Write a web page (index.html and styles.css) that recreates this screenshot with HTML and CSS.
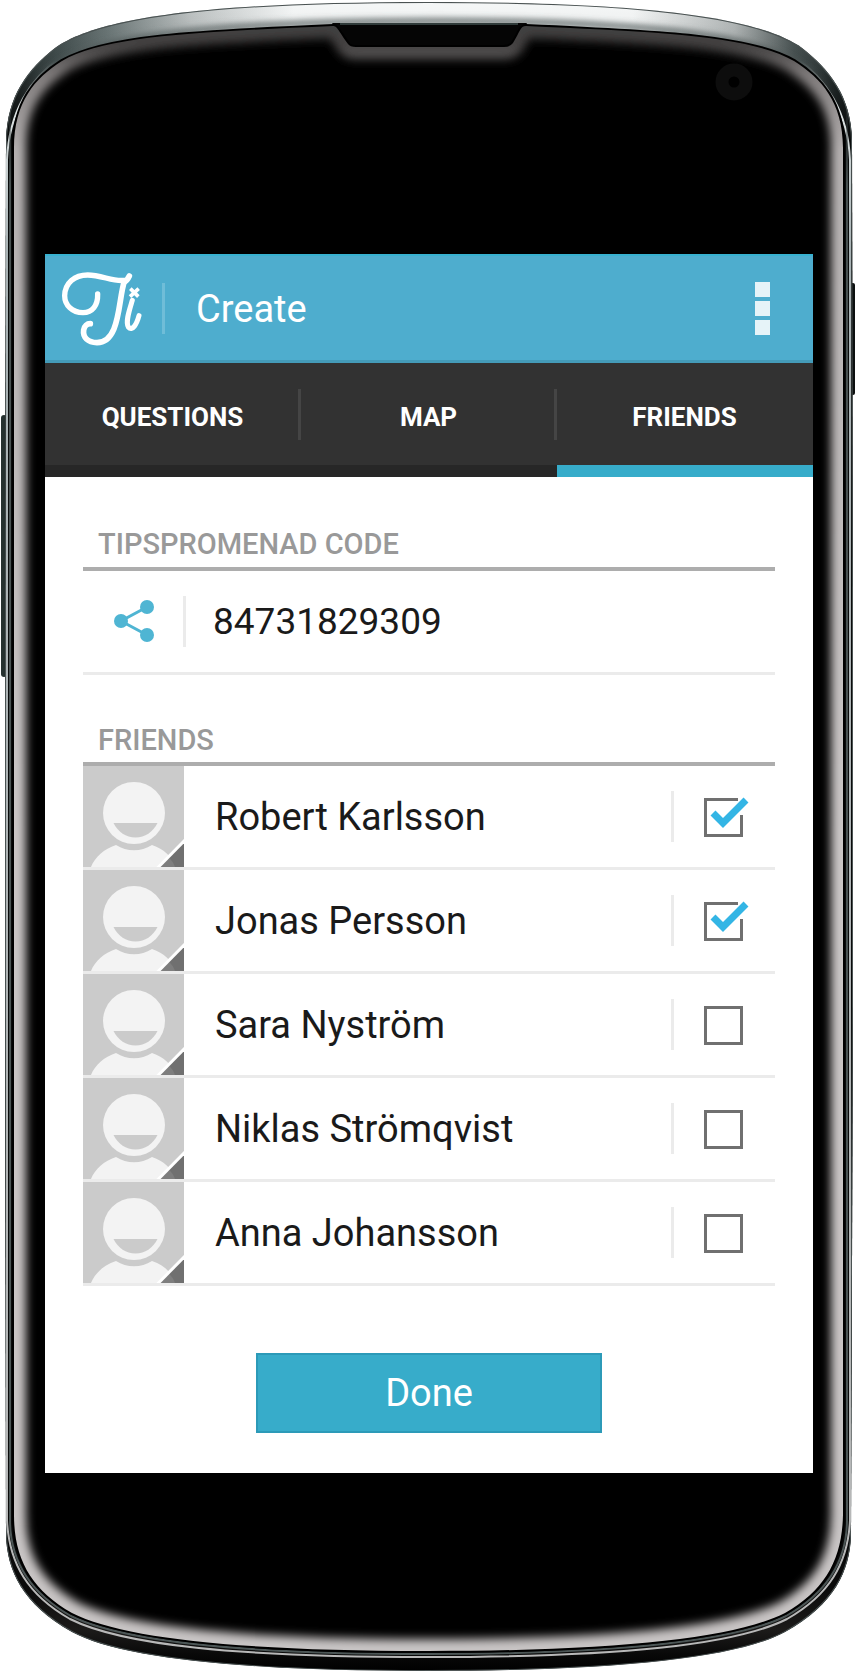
FILE: index.html
```html
<!DOCTYPE html>
<html lang="en">
<head>
<meta charset="utf-8">
<meta name="viewport" content="width=device-width, initial-scale=1">
<title>Create – Friends</title>
<link rel="stylesheet" href="styles.css">
</head>
<body>
<svg class="symbols" aria-hidden="true">
  <symbol id="person" viewBox="0 0 101 101">
    <rect width="101" height="101" fill="#cbcbcb"/>
    <circle cx="51" cy="47" r="31" fill="#f3f3f3"/>
    <path d="M30.500 57H74.500C70 66 62 71.500 52.500 71.500S35 66 30.500 57Z" fill="#cbcbcb"/>
    <path d="M8 101C12 91 21 83 33 79C44 86 58 86 69 79C81 83 89 91 93 101Z" fill="#f3f3f3"/>
    <path d="M75 101L101 74V101Z" fill="#707070"/>
    <path d="M75 101L85 91Q90 95 92 101Z" fill="#7e7e7e"/>
    <path d="M74.500 102L102 74" stroke="#fff" stroke-width="3"/>
  </symbol>
</svg>
<div class="phone">
  <svg class="shell" viewBox="0 0 856 1672" preserveAspectRatio="none" aria-hidden="true">
    <defs>
      <linearGradient id="metal" x1="0" y1="0" x2="1" y2="0">
        <stop offset="0" stop-color="#1d2424"/>
        <stop offset="0.06" stop-color="#434f4f"/>
        <stop offset="0.12" stop-color="#6c7878"/>
        <stop offset="0.22" stop-color="#bfc4c4"/>
        <stop offset="0.34" stop-color="#f6f8f8"/>
        <stop offset="0.74" stop-color="#f6f8f8"/>
        <stop offset="0.86" stop-color="#b5baba"/>
        <stop offset="0.93" stop-color="#4c5656"/>
        <stop offset="1" stop-color="#182020"/>
      </linearGradient>
      <linearGradient id="fall" gradientUnits="userSpaceOnUse" x1="0" y1="0" x2="0" y2="1672">
        <stop offset="0" stop-color="#141414" stop-opacity="0"/>
        <stop offset="0.04" stop-color="#0c0f0f" stop-opacity="0.1"/>
        <stop offset="0.08" stop-color="#0a0c0c"/>
        <stop offset="0.95" stop-color="#0a0a0a"/>
        <stop offset="0.975" stop-color="#1c1b1a"/>
        <stop offset="0.99" stop-color="#080808"/>
        <stop offset="1" stop-color="#000"/>
      </linearGradient>
      <linearGradient id="glow" gradientUnits="userSpaceOnUse" x1="0" y1="0" x2="0" y2="1672">
        <stop offset="0" stop-color="#3c3a3a"/>
        <stop offset="0.028" stop-color="#444242"/>
        <stop offset="0.045" stop-color="#807c7c"/>
        <stop offset="0.09" stop-color="#b4b0b0"/>
        <stop offset="0.5" stop-color="#cac6c6"/>
        <stop offset="1" stop-color="#c8c4c4"/>
      </linearGradient>
      <linearGradient id="rim" gradientUnits="userSpaceOnUse" x1="0" y1="60" x2="0" y2="1672">
        <stop offset="0" stop-color="#aab4b4" stop-opacity="0"/>
        <stop offset="0.03" stop-color="#dde3e3"/>
        <stop offset="0.12" stop-color="#a8b2b4"/>
        <stop offset="1" stop-color="#b8b8b8"/>
      </linearGradient>
      <linearGradient id="band" gradientUnits="userSpaceOnUse" x1="0" y1="90" x2="0" y2="1672">
        <stop offset="0" stop-color="#3f4848" stop-opacity="0"/>
        <stop offset="0.06" stop-color="#475050"/>
        <stop offset="1" stop-color="#4c5656"/>
      </linearGradient>
      <filter id="soft" filterUnits="userSpaceOnUse" x="-20" y="-20" width="900" height="1720">
        <feGaussianBlur stdDeviation="5"/>
      </filter>
      <filter id="slight" filterUnits="userSpaceOnUse" x="-20" y="-20" width="900" height="200">
        <feGaussianBlur stdDeviation="3"/>
      </filter>
      <path id="body" d="M6 140C7 96 28 69 55 48C97 18 205 2 428 2S760 18 802 48C829 69 851 96 852 140L853 600V1000L851 1535C850 1570 835 1604 785 1632C737 1658 616 1671 428 1671S120 1658 72 1632C22 1604 7 1570 6 1535L5 1000V600Z"/>
      <path id="glass" d="M14 148C14 102 35 78 62 61C105 36 195 32 333 26C337 26 338 30 348 44Q350 47 356 47H504Q510 47 513 43C520 32 520 26 526 26C661 32 751 36 794 61C821 78 843 102 843 148V1515C842 1560 825 1590 785 1613C735 1638 620 1651 428 1651S122 1638 72 1613C32 1590 14 1560 14 1515Z"/>
      <clipPath id="bodyClip"><use href="#body"/></clipPath>
      <clipPath id="glassClip"><use href="#glass"/></clipPath>
    </defs>
    <rect x="1" y="415" width="6" height="262" rx="3" fill="#26312f"/>
    <rect x="850" y="283" width="5" height="112" rx="2" fill="#0c1010"/>
    <use href="#body" fill="url(#metal)"/>
    <g clip-path="url(#bodyClip)">
      <path d="M28 100C50 45 140 22 428 21S806 45 830 100" fill="none" stroke="#566060" stroke-width="5" filter="url(#slight)"/>
      <use href="#body" fill="url(#fall)"/>
      <use href="#body" fill="none" stroke="#4a5252" stroke-width="2"/>
      <path d="M7 160C9 112 30 78 60 58C105 33 200 27 428 23C657 27 751 33 796 58C826 78 848 112 850 160V1520C848 1564 829 1595 787 1619C735 1645 620 1657 428 1657S122 1645 70 1619C28 1595 9 1564 7 1520Z" fill="none" stroke="url(#rim)" stroke-width="2"/>
      <path d="M10 100V1520C10 1562 30 1593 71 1616C122 1641 236 1654 428 1654S735 1641 786 1616C827 1593 847 1562 847 1520V100" fill="none" stroke="url(#band)" stroke-width="2"/>
    </g>
    <path d="M332 23H527L514 46H348Z" fill="#050505"/>
    <use href="#glass" fill="#000" stroke="#000" stroke-width="4"/>
    <path d="M340 24H518" stroke="#303b3a" stroke-width="2"/>
    <g clip-path="url(#glassClip)">
      <use href="#glass" fill="none" stroke="url(#glow)" stroke-width="24" filter="url(#soft)"/>
    </g>
    <circle cx="734" cy="82" r="12" fill="none" stroke="#0d0d0d" stroke-width="13"/>
  </svg>

  <main class="screen">
    <header class="bar">
      <svg class="logo" viewBox="0 0 249 231" role="img" aria-label="Ti">
        <g fill="none" stroke="#fff" stroke-linecap="round" stroke-linejoin="round">
          <path d="M113 72C114 106 97 128 69 128C37 127 14 106 14 77C15 39 44 15 83 15C126 15 158 36 194 31" stroke-width="16"/>
          <path d="M208 18Q202 31 193 36" stroke-width="17"/>
          <path d="M193 34C174 91 181 218 111 218C83 217 68 202 71 180C73 168 81 161 91 161" stroke-width="17"/>
          <path d="M217 91C207 124 196 155 205 171C217 185 230 163 237 137" stroke-width="15"/>
          <path d="M211 56L235 80M236 56L210 80" stroke-width="11" stroke-linecap="butt"/>
        </g>
      </svg>
      <span class="bar-rule"></span>
      <h1 class="bar-title">Create</h1>
      <button class="more" type="button" aria-label="More options"><i></i><i></i><i></i></button>
    </header>

    <nav class="tabs">
      <button class="tab" type="button">QUESTIONS</button>
      <button class="tab" type="button">MAP</button>
      <button class="tab tab-active" type="button" aria-current="page">FRIENDS</button>
    </nav>

    <div class="content">
      <section>
        <h2 class="heading">TIPSPROMENAD CODE</h2>
        <div class="row">
          <button class="share" type="button" aria-label="Share code">
            <svg width="42" height="42" viewBox="0 0 42 42">
              <path d="M34 7L8 21L34 35" fill="none" stroke="#4fb5d3" stroke-width="3"/>
              <g fill="#4fb5d3"><circle cx="8" cy="21" r="7"/><circle cx="34" cy="7" r="7"/><circle cx="34" cy="35" r="7"/></g>
            </svg>
          </button>
          <span class="rule"></span>
          <span class="text code">84731829309</span>
        </div>
      </section>

      <section>
        <h2 class="heading">FRIENDS</h2>
        <ul class="list">
          <li><label class="row"><svg class="avatar" aria-hidden="true"><use href="#person"/></svg><span class="text">Robert Karlsson</span><span class="rule"></span><span class="check"><input type="checkbox" checked><svg class="tick" viewBox="0 0 46 42" aria-hidden="true"><path class="gap" d="M34 0H40V18H34Z"/><path class="mark" d="M9 16L19 26L42 3"/></svg></span></label></li>
          <li><label class="row"><svg class="avatar" aria-hidden="true"><use href="#person"/></svg><span class="text">Jonas Persson</span><span class="rule"></span><span class="check"><input type="checkbox" checked><svg class="tick" viewBox="0 0 46 42" aria-hidden="true"><path class="gap" d="M34 0H40V18H34Z"/><path class="mark" d="M9 16L19 26L42 3"/></svg></span></label></li>
          <li><label class="row"><svg class="avatar" aria-hidden="true"><use href="#person"/></svg><span class="text">Sara Nyström</span><span class="rule"></span><span class="check"><input type="checkbox"><svg class="tick" viewBox="0 0 46 42" aria-hidden="true"><path class="gap" d="M34 0H40V18H34Z"/><path class="mark" d="M9 16L19 26L42 3"/></svg></span></label></li>
          <li><label class="row"><svg class="avatar" aria-hidden="true"><use href="#person"/></svg><span class="text">Niklas Strömqvist</span><span class="rule"></span><span class="check"><input type="checkbox"><svg class="tick" viewBox="0 0 46 42" aria-hidden="true"><path class="gap" d="M34 0H40V18H34Z"/><path class="mark" d="M9 16L19 26L42 3"/></svg></span></label></li>
          <li><label class="row"><svg class="avatar" aria-hidden="true"><use href="#person"/></svg><span class="text">Anna Johansson</span><span class="rule"></span><span class="check"><input type="checkbox"><svg class="tick" viewBox="0 0 46 42" aria-hidden="true"><path class="gap" d="M34 0H40V18H34Z"/><path class="mark" d="M9 16L19 26L42 3"/></svg></span></label></li>
        </ul>
      </section>

      <button class="done" type="button">Done</button>
    </div>
  </main>
</div>
</body>
</html>
```
FILE: styles.css
```css
* {
  box-sizing: border-box;
}

body {
  margin: 0;
  background: #fff;
  font-family: Roboto, "Liberation Sans", sans-serif;
}

button {
  margin: 0;
  padding: 0;
  border: 0;
  background: none;
  font: inherit;
  cursor: pointer;
}

.symbols {
  position: absolute;
  width: 0;
  height: 0;
}

.phone {
  position: relative;
  padding: 254px 43px 199px 45px;
}

.shell {
  position: absolute;
  inset: 0;
  width: 100%;
  height: 100%;
}

.screen {
  position: relative;
  background: #fff;
}

.bar {
  display: flex;
  align-items: center;
  height: 109px;
  padding: 0 43px 0 15px;
  background: #4eadce;
  border-top: 2px solid #37b1d0;
  border-bottom: 3px solid #449bb9;
}

.logo {
  width: 83px;
  height: 77px;
}

.bar-rule {
  width: 3px;
  height: 51px;
  margin: 0 31px 0 19px;
  background: #6fbdd8;
}

.bar-title {
  flex: 1;
  margin: 0;
  padding-top: 2px;
  color: #fff;
  font-size: 38px;
  font-weight: 400;
  line-height: 48px;
}

.more {
  display: grid;
  gap: 4px;
}

.more i {
  width: 15px;
  height: 15px;
  background: #e6f3f8;
}

.tabs {
  display: grid;
  grid-template-columns: repeat(3, 1fr);
  background: #323232;
}

.tab {
  display: grid;
  grid-template-columns: 1fr 3px;
  align-items: center;
  height: 114px;
  padding: 6px 0 0 2px;
  border-bottom: 12px solid #272727;
  color: #fff;
  font-size: 26px;
  font-weight: 700;
  text-align: center;
}

.tab::after {
  content: "";
  height: 51px;
  margin-bottom: 6px;
  background: #454545;
}

.tab-active {
  border-bottom-color: #37acca;
}

.tab-active::after {
  background: none;
}

.content {
  display: flex;
  flex-direction: column;
  padding: 0 38px 40px;
}

.heading {
  height: 94px;
  margin: 0;
  padding: 49px 15px 0;
  border-bottom: 4px solid #adadad;
  color: #999;
  font-size: 29px;
  font-weight: 500;
  line-height: 36px;
}

section + section .heading {
  height: 91px;
  padding-top: 47px;
}

.row {
  display: flex;
  align-items: center;
  height: 104px;
  border-bottom: 3px solid #ebebeb;
}

.share {
  display: flex;
  width: 100px;
  padding: 0 0 2px 30px;
}

.rule {
  width: 3px;
  height: 51px;
  background: #ebebeb;
}

.text {
  flex: 1;
  padding-left: 31px;
  color: #1a1a1a;
  font-size: 38px;
  line-height: 48px;
}

.code {
  padding-left: 27px;
  font-size: 37px;
}

.list {
  margin: 0;
  padding: 0;
  list-style: none;
}

.avatar {
  width: 101px;
  height: 101px;
}

.check {
  display: grid;
  width: 101px;
  padding: 2px 0 0 30px;
}

.check input {
  grid-area: 1 / 1;
  align-self: center;
  width: 39px;
  height: 39px;
  margin: 0;
  border: 3px solid #707070;
  appearance: none;
}

.tick {
  grid-area: 1 / 1;
  visibility: hidden;
  width: 46px;
  height: 42px;
  pointer-events: none;
  overflow: visible;
}

.check input:checked + .tick {
  visibility: visible;
}

.gap {
  fill: #fff;
}

.mark {
  fill: none;
  stroke: #33b5e5;
  stroke-width: 7;
}

.done {
  align-self: center;
  width: 50%;
  height: 80px;
  margin-top: 67px;
  border: 2px solid #2c9ab8;
  background: #37acca;
  color: #fff;
  font-size: 38px;
}
```
